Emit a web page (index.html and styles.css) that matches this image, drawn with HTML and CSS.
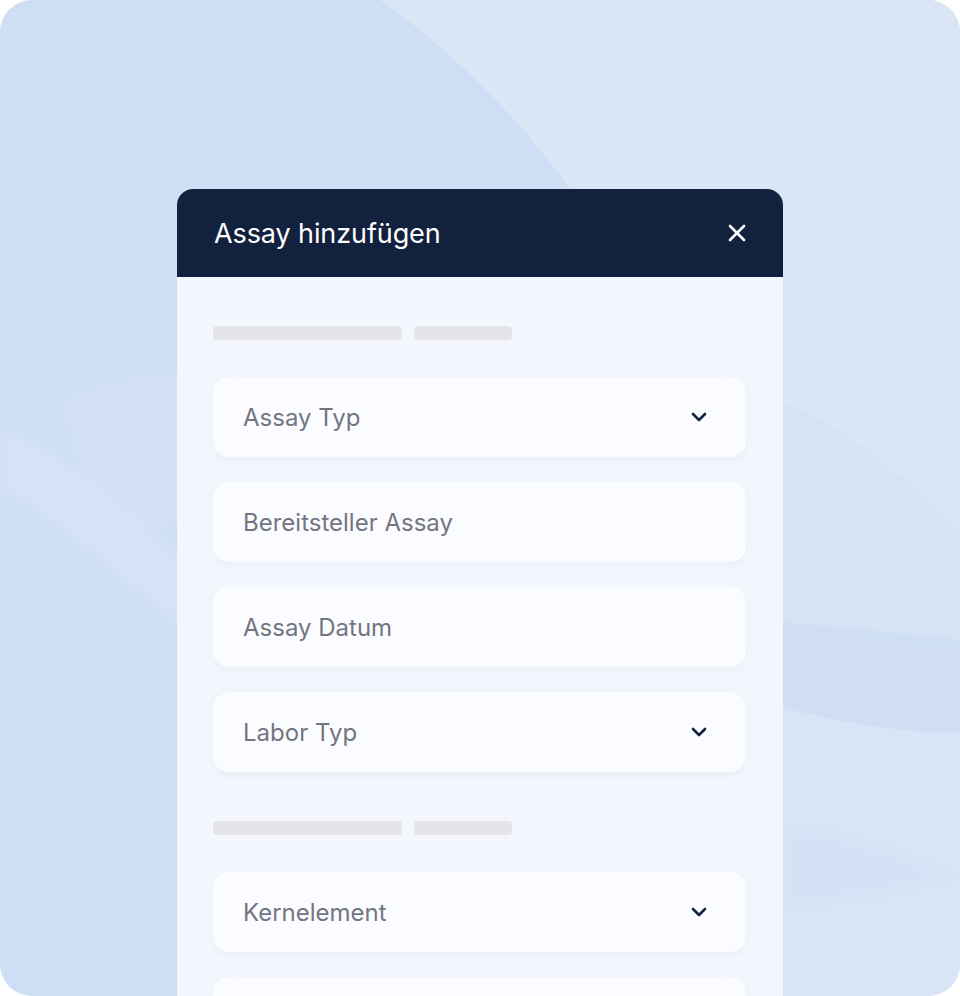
FILE: index.html
```html
<!DOCTYPE html>
<html lang="de">
<head>
    <meta charset="UTF-8">
    <meta name="viewport" content="width=device-width, initial-scale=1.0">
    <title>Assay hinzufügen</title>
    <link rel="stylesheet" href="styles.css">
</head>
<body>
    <div class="scene">
        <!-- dekorativer Hintergrund -->
        <svg class="waves" viewBox="0 0 960 996" preserveAspectRatio="none" aria-hidden="true">
            <defs>
                <filter id="soft" x="-20%" y="-20%" width="140%" height="140%">
                    <feGaussianBlur stdDeviation="4"/>
                </filter>
            </defs>
            <path d="M380 0 C480 70 570 170 640 300 C690 370 740 395 783 403 C850 430 910 480 960 535 L960 0 Z" fill="#DAE6F6"/>
            <path d="M783 403 C850 430 910 480 960 535 L960 640 C900 632 840 628 783 622 Z" fill="#D7E3F5"/>
            <path d="M783 622 C840 628 900 640 960 647 L960 733 C900 733 840 722 783 708 Z" fill="#CFDEF5"/>
            <path d="M783 708 C840 722 900 733 960 733 L960 996 L783 996 Z" fill="#D9E5F6"/>
            <path d="M783 825 C840 830 900 850 960 876 C900 895 840 905 783 906 Z" fill="#D5E2F5" filter="url(#soft)"/>
            <path d="M60 400 C100 385 140 375 177 372 L177 525 C140 528 110 528 90 525 C80 470 70 430 60 400 Z" fill="#D3E1F5" filter="url(#soft)"/>
            <path d="M0 428 C60 450 130 510 177 555 L177 625 C130 585 60 520 0 488 Z" fill="#D6E3F6" filter="url(#soft)"/>
        </svg>

        <div class="dialog">
            <div class="dialog-header">
                <h1>Assay hinzufügen</h1>
                <button class="close-btn" aria-label="Schließen">
                    <svg width="18" height="18" viewBox="0 0 18 18">
                        <path d="M2 2 L16 16 M16 2 L2 16" stroke="#fff" stroke-width="2.6" stroke-linecap="round"/>
                    </svg>
                </button>
            </div>

            <div class="dialog-body">
                <div class="skeleton-row">
                    <span class="skeleton long"></span>
                    <span class="skeleton short"></span>
                </div>

                <div class="field-list">
                    <div class="field">
                        <span>Assay Typ</span>
                        <svg class="chevron" width="16" height="10" viewBox="0 0 16 10"><path d="M2 2 L8 8 L14 2" fill="none" stroke="#12213D" stroke-width="2.6" stroke-linecap="round" stroke-linejoin="round"/></svg>
                    </div>
                    <div class="field"><span>Bereitsteller Assay</span></div>
                    <div class="field"><span>Assay Datum</span></div>
                    <div class="field">
                        <span>Labor Typ</span>
                        <svg class="chevron" width="16" height="10" viewBox="0 0 16 10"><path d="M2 2 L8 8 L14 2" fill="none" stroke="#12213D" stroke-width="2.6" stroke-linecap="round" stroke-linejoin="round"/></svg>
                    </div>
                </div>

                <div class="skeleton-row">
                    <span class="skeleton long"></span>
                    <span class="skeleton short"></span>
                </div>

                <div class="field-list">
                    <div class="field">
                        <span>Kernelement</span>
                        <svg class="chevron" width="16" height="10" viewBox="0 0 16 10"><path d="M2 2 L8 8 L14 2" fill="none" stroke="#12213D" stroke-width="2.6" stroke-linecap="round" stroke-linejoin="round"/></svg>
                    </div>
                    <div class="field"><span>&nbsp;</span></div>
                </div>
            </div>
        </div>
    </div>
</body>
</html>
```

FILE: styles.css
```css
* {
    margin: 0;
    padding: 0;
    box-sizing: border-box;
}

body {
    font-family: 'Inter', 'Noto Sans', sans-serif;
    background: #fff;
    width: 960px;
    height: 996px;
    overflow: hidden;
}

.scene {
    position: relative;
    width: 960px;
    height: 996px;
    border-radius: 32px;
    overflow: hidden;
    background: #CEDEF5;
    padding: 189px 0 0 177px;
}

.waves {
    position: absolute;
    top: 0;
    left: 0;
    width: 960px;
    height: 996px;
}

.dialog {
    position: relative;
    width: 606px;
    height: 820px;
    border-radius: 16px 16px 0 0;
    overflow: hidden;
    background: #F3F7FD;
}

.dialog-header {
    height: 88px;
    background: #12213D;
    display: flex;
    align-items: center;
    justify-content: space-between;
    padding: 0 37px;
}

.dialog-header h1 {
    color: #fff;
    font-size: 27px;
    font-weight: 400;
    letter-spacing: -0.1px;
}

.close-btn {
    background: none;
    border: none;
    width: 18px;
    height: 18px;
    display: flex;
    cursor: pointer;
}

.dialog-body {
    padding: 49px 37px 0 36px;
}

.skeleton-row {
    display: flex;
    gap: 12px;
    margin-bottom: 37px;
}

.skeleton {
    display: block;
    height: 14px;
    border-radius: 4px;
    background: #E4E4E9;
}

.skeleton.long {
    width: 189px;
}

.skeleton.short {
    width: 98px;
}

.field-list {
    display: flex;
    flex-direction: column;
    gap: 25px;
    margin-bottom: 49px;
}

.field {
    height: 80px;
    border-radius: 16px;
    background: #FAFCFF;
    box-shadow: 0 4px 10px rgba(120, 140, 180, 0.07);
    display: flex;
    align-items: center;
    justify-content: space-between;
    padding: 0 39px 0 30px;
    font-size: 24px;
    color: #74757F;
}

.chevron {
    display: block;
}
```
